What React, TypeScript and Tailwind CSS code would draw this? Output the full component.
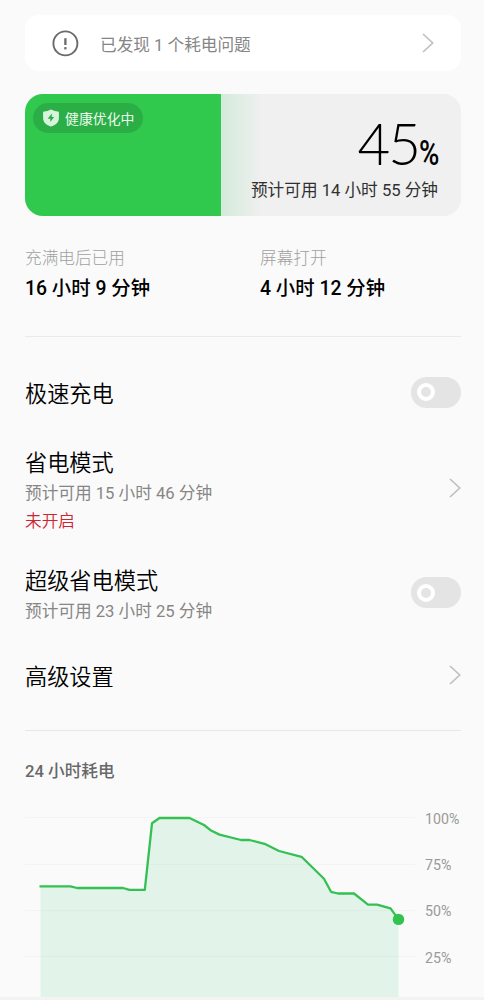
import React from "react";

function Chevron() {
  return (
    <svg className="h-5 w-3 shrink-0" viewBox="0 0 12 20" fill="none" stroke="#c0c0c0" strokeWidth="1.7">
      <path d="M1 1 L10.7 10 L1 19" />
    </svg>
  );
}

function Toggle() {
  return (
    <button
      role="switch"
      aria-checked="false"
      className="flex h-[31px] w-[50px] shrink-0 items-center rounded-full bg-[#e4e4e4] pl-1.5"
    >
      <span className="size-[18px] rounded-full border-4 border-white" />
    </button>
  );
}

const levels = ["100%", "75%", "50%", "25%"];
const line =
  "M14.5 96.3 H45.5 L52 98 H98 L104.5 99.9 H119.8 L127 33.3 L134.5 28 H164.5 L179 35 L186.5 40.8 L194.5 44.6 L216 50 H224.5 L239.5 53.8 L254 61 L276.5 66.8 L299 88.8 L306 101.8 L313 103.5 H329 L343 114.6 H352 L365.5 118.3 L373.5 129.4";

export default function App() {
  return (
    <main className="flex h-[1000px] w-[484px] flex-col overflow-hidden bg-[#fafafa] pr-[23px] pl-[25px] pt-[15px] font-[Roboto,'Noto_Sans_CJK_SC',sans-serif] text-[16.65px] text-black">
      <section className="flex h-14 shrink-0 items-center rounded-[14px] bg-white pr-[27px] pl-[27px]">
        <svg className="size-[27px]" viewBox="0 0 27 27" fill="none" stroke="#6a6a6a">
          <circle cx="13.4" cy="13.4" r="12" strokeWidth="1.9" />
          <path d="M13.4 8.2 V15" strokeWidth="2.3" />
          <path d="M13.4 17.1 V19.4" strokeWidth="2.3" />
        </svg>
        <span className="mt-[5px] ml-[21px] flex-1 leading-6 text-[#868686]">已发现 1 个耗电问题</span>
        <Chevron />
      </section>

      <section className="mt-[23px] flex h-[122px] shrink-0 overflow-hidden rounded-[18px] bg-[#f0f0f0]">
        <div className="w-[196px] shrink-0 bg-[#30c94e] pt-[9px] pl-[8px]">
          <div className="flex h-[30px] w-[110px] items-center rounded-full bg-[#2cae47] pl-[10px] text-[13.9px] whitespace-nowrap text-[#eafaed]">
            <svg className="mr-[6px] h-[18px] w-4 shrink-0" viewBox="0 0 16 18">
              <path d="M8 .4 Q11.5 2.4 15.9 2.8 V9 C15.9 13.6 12.4 16.3 8 17.6 C3.6 16.3 .1 13.6 .1 9 V2.8 Q4.5 2.4 8 .4Z" fill="#d8f4dd" />
              <path d="M8.8 4.5 L4.7 9.7 H7.3 V13 L11.2 8.1 H8.8Z" fill="#2cae47" />
            </svg>
            <span className="pt-0.5">健康优化中</span>
          </div>
        </div>
        <div className="flex flex-1 flex-col items-end bg-linear-to-r from-[#d4eadb] to-[#f0f0f0] to-[42px] pt-[19px] pr-[23px]">
          <div className="flex h-[64px] items-baseline leading-[61px]">
            <span className="font-[Lato] text-[56.5px] font-light tracking-[-2px]">45</span>
            <span className="-mr-0.5 w-[21px] origin-left scale-x-[0.79] font-[Roboto] text-[35px] font-medium">%</span>
          </div>
          <p className="leading-7 text-[#303030]">预计可用 14 小时 55 分钟</p>
        </div>
      </section>

      <section className="mt-[28px] grid h-[93px] shrink-0 grid-cols-[235px_1fr] content-start border-b border-[#eaeaea]">
        <div>
          <p className="h-7 leading-[29px] font-light text-[#a0a0a0]">充满电后已用</p>
          <p className="text-[19.4px] leading-[34px] font-medium">16 小时 9 分钟</p>
        </div>
        <div>
          <p className="h-7 leading-[29px] font-light text-[#a0a0a0]">屏幕打开</p>
          <p className="text-[19.4px] leading-[34px] font-medium">4 小时 12 分钟</p>
        </div>
      </section>

      <section className="flex h-[394px] shrink-0 flex-col border-b border-[#e7e7e7] pt-[39px]">
        <div className="flex h-8 items-center justify-between">
          <h2 className="pt-1 text-[22.2px] leading-8 font-[350]">极速充电</h2>
          <Toggle />
        </div>
        <div className="mt-[36px] flex h-[88px] items-center justify-between">
          <div className="pt-[5px]">
            <h2 className="text-[22.2px] leading-8 font-[350]">省电模式</h2>
            <p className="leading-[29px] text-[#868686]">预计可用 15 小时 46 分钟</p>
            <p className="leading-[27px] font-[350] text-[#cc2531]">未开启</p>
          </div>
          <Chevron />
        </div>
        <div className="mt-[30px] flex h-[61px] items-center justify-between">
          <div className="pt-[5px]">
            <h2 className="text-[22.2px] leading-8 font-[350]">超级省电模式</h2>
            <p className="leading-[29px] text-[#868686]">预计可用 23 小时 25 分钟</p>
          </div>
          <Toggle />
        </div>
        <div className="mt-[36px] flex h-8 items-center justify-between">
          <h2 className="pt-[3px] text-[22.2px] leading-8 font-[350]">高级设置</h2>
          <Chevron />
        </div>
      </section>

      <section className="flex flex-1 flex-col pt-[27px]">
        <h3 className="h-[32px] leading-7 font-medium text-[#686868]">24 小时耗电</h3>
        <div className="flex">
          <svg className="h-[207px] w-[390px] shrink-0" viewBox="0 0 390 207" fill="none">
            <path d="M0 27.5 H390 M0 74.5 H390 M0 120.5 H390 M0 166.5 H390" stroke="#f3f3f3" />
            <path d={line + " V207 H15.5 V96.3Z"} fill="#30c96b" fillOpacity=".115" />
            <path d={line} stroke="#34c052" strokeWidth="2.3" strokeLinejoin="round" />
            <circle cx="373.5" cy="129.4" r="5.7" fill="#30c44e" />
          </svg>
          <div className="ml-[10px] flex flex-col pt-[5px] text-[14.2px] text-[#999999]">
            {levels.map((level) => (
              <span key={level} className="h-[46.2px] leading-[48px]">
                {level}
              </span>
            ))}
          </div>
        </div>
      </section>
      <div className="-mr-[23px] -ml-[25px] h-[3px] shrink-0 bg-[#f3f3f3]" />
    </main>
  );
}
